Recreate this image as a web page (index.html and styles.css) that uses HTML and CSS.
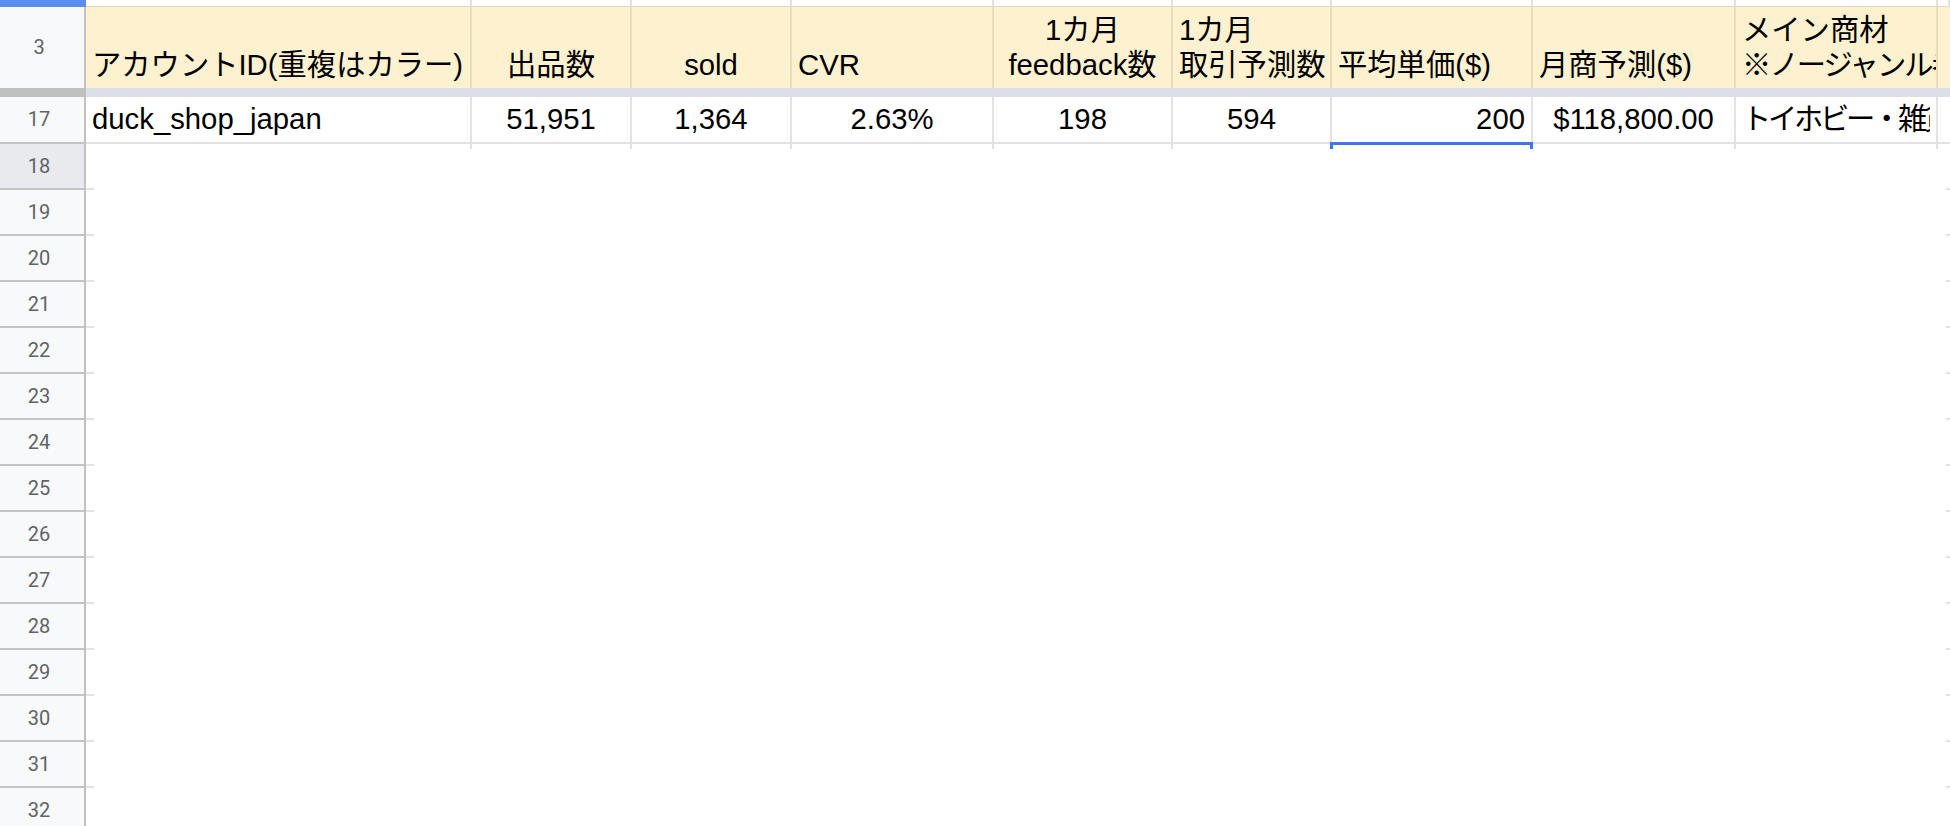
FILE: index.html
```html
<!DOCTYPE html>
<html lang="ja">
<head>
<meta charset="utf-8">
<title>Sheet</title>
<link rel="stylesheet" href="styles.css">
</head>
<body>
<div class="sheet">
  <div class="row top">
    <div class="rh rh-blue"></div>
    <div class="c wa"></div><div class="c wb"></div><div class="c wc"></div><div class="c wd"></div><div class="c we"></div><div class="c wf"></div><div class="c wg"></div><div class="c wh"></div><div class="c wi"></div><div class="c wj"></div>
  </div>
  <div class="row head">
    <div class="rh">3</div>
    <div class="c wa l"><span class="tx">アカウントID(重複はカラー)</span></div>
    <div class="c wb m"><span class="tx">出品数</span></div>
    <div class="c wc m"><span class="tx">sold</span></div>
    <div class="c wd l"><span class="tx">CVR</span></div>
    <div class="c we m"><span class="tx">1カ月<br>feedback数</span></div>
    <div class="c wf l"><span class="tx">1カ月<br>取引予測数</span></div>
    <div class="c wg l"><span class="tx">平均単価($)</span></div>
    <div class="c wh l"><span class="tx">月商予測($)</span></div>
    <div class="c wi l"><span class="tx">メイン商材<br><span class="tight">※ノージャンル者</span></span></div>
    <div class="c wj"></div>
  </div>
  <div class="row freeze">
    <div class="rh"></div>
    <div class="fz"></div>
  </div>
  <div class="row data">
    <div class="rh">17</div>
    <div class="c wa l"><span class="tx">duck_shop_japan</span></div>
    <div class="c wb m"><span class="tx">51,951</span></div>
    <div class="c wc m"><span class="tx">1,364</span></div>
    <div class="c wd m"><span class="tx">2.63%</span></div>
    <div class="c we m"><span class="tx">198</span></div>
    <div class="c wf m"><span class="tx">594</span></div>
    <div class="c wg r"><span class="tx">200</span><span class="sel"></span></div>
    <div class="c wh m"><span class="tx">$118,800.00</span></div>
    <div class="c wi l"><span class="tx tighter">トイホビー・雑貨</span></div>
    <div class="c wj"></div>
  </div>
  <div class="row erow"><div class="rh rh-hl">18</div><div class="eb"></div></div>
  <div class="row erow"><div class="rh">19</div><div class="eb"></div></div>
  <div class="row erow"><div class="rh">20</div><div class="eb"></div></div>
  <div class="row erow"><div class="rh">21</div><div class="eb"></div></div>
  <div class="row erow"><div class="rh">22</div><div class="eb"></div></div>
  <div class="row erow"><div class="rh">23</div><div class="eb"></div></div>
  <div class="row erow"><div class="rh">24</div><div class="eb"></div></div>
  <div class="row erow"><div class="rh">25</div><div class="eb"></div></div>
  <div class="row erow"><div class="rh">26</div><div class="eb"></div></div>
  <div class="row erow"><div class="rh">27</div><div class="eb"></div></div>
  <div class="row erow"><div class="rh">28</div><div class="eb"></div></div>
  <div class="row erow"><div class="rh">29</div><div class="eb"></div></div>
  <div class="row erow"><div class="rh">30</div><div class="eb"></div></div>
  <div class="row erow"><div class="rh">31</div><div class="eb"></div></div>
  <div class="row erow"><div class="rh">32</div><div class="eb"></div></div>
</div>
</body>
</html>
```
FILE: styles.css
```css
html, body {
  margin: 0;
  padding: 0;
  background: #ffffff;
}

body {
  font-family: "Liberation Sans", Arial, "Noto Sans CJK JP", sans-serif;
  color: #000000;
  overflow: hidden;
}

.sheet {
  width: 1950px;
  height: 826px;
  overflow: hidden;
}

.row {
  display: flex;
  width: 1950px;
}

/* row headers */
.rh {
  flex: none;
  width: 86px;
  box-sizing: border-box;
  border-right: 2px solid #c2c2c2;
  background: #f8f9fa;
  font-family: Roboto, "Liberation Sans", sans-serif;
  font-size: 20px;
  color: #5f6368;
  display: flex;
  align-items: center;
  justify-content: center;
  padding-right: 6px;
  padding-bottom: 1px;
}

.rh-blue {
  background: #5b8ef0;
  border-right-color: #5b8ef0;
}

.rh-hl {
  background: #e8eaed;
}

/* cells */
.c {
  flex: none;
  position: relative;
  box-sizing: border-box;
  overflow: hidden;
  white-space: nowrap;
  font-size: 29.3px;
  line-height: 35px;
  padding: 0 6px 6px 6px;
  display: flex;
  flex-direction: column;
  justify-content: flex-end;
}

.l { text-align: left; }
.m { text-align: center; }
.r { text-align: right; }

.tight { letter-spacing: -1.9px; }
.tighter { letter-spacing: -3.3px; }

.wa { width: 386px; }
.wb { width: 160px; }
.wc { width: 160px; }
.wd { width: 202px; }
.we { width: 179px; }
.wf { width: 159px; }
.wg { width: 201px; }
.wh { width: 203px; }
.wi { width: 202px; }
.wj { flex: 1 1 auto; min-width: 0; }

/* top partial row */
.top {
  height: 7px;
}
.top .rh {
  padding: 0;
}
.top .c {
  padding: 0;
  background: #ffffff;
  border-right: 2px solid #e2e2e2;
  border-bottom: 1px solid #e4d9b7;
}

/* header row */
.head {
  height: 81px;
}
.head .c {
  background: #fdf1cf;
  border-right: 2px solid #e8ddbb;
}

/* freeze bar */
.freeze {
  height: 9px;
}
.freeze .rh {
  padding: 0;
  background: #c0c0c0;
  border-right-color: #c0c0c0;
}
.fz {
  flex: 1 1 auto;
  background: #dcdfe8;
}

/* data row */
.data {
  height: 47px;
}
.data .rh {
  border-bottom: 2px solid #c4c4c4;
}
.data .c {
  background: #ffffff;
  border-right: 2px solid #e2e2e2;
  border-bottom: 2px solid #e2e2e2;
  overflow: visible;
}
.data .c .tx {
  overflow: hidden;
}
.data .wi .tx {
  max-width: 194px;
}
.data .c::after {
  content: "";
  position: absolute;
  right: -2px;
  top: calc(100% + 2px);
  width: 2px;
  height: 5px;
  background: #e2e2e2;
}
.data .wj::after {
  display: none;
}

/* selection on G17 */
.sel {
  position: absolute;
  left: -2px;
  right: -2px;
  bottom: -3px;
  height: 3px;
  background: #3b78e7;
  z-index: 2;
}
.sel::before,
.sel::after {
  content: "";
  position: absolute;
  top: 0;
  width: 3px;
  height: 7px;
  background: #3b78e7;
}
.sel::before { left: 0; }
.sel::after { right: 0; }

/* empty rows */
.erow {
  height: 46px;
}
.erow .rh {
  border-bottom: 2px solid #c4c4c4;
}
.eb {
  flex: 1 1 auto;
  background:
    linear-gradient(#e3e3e3, #e3e3e3) left bottom / 8px 2px no-repeat,
    linear-gradient(#e3e3e3, #e3e3e3) right bottom / 4px 2px no-repeat,
    #ffffff;
}
```
